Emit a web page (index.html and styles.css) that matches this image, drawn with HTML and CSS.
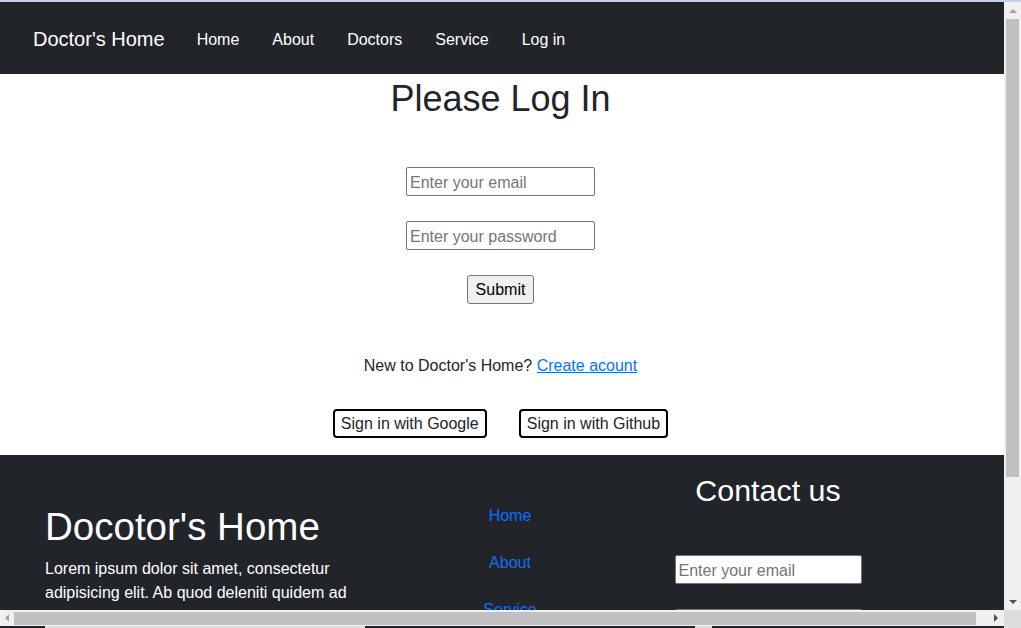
FILE: index.html
```html
<!DOCTYPE html>
<html lang="en">
<head>
<meta charset="utf-8">
<title>Doctor's Home - Log In</title>
<link rel="stylesheet" href="styles.css">
</head>
<body>
<div class="window">
  <div class="topline"></div>
  <div class="viewport">
    <nav class="navbar">
      <a class="brand" href="#">Doctor's Home</a>
      <a class="nav-link" href="#">Home</a>
      <a class="nav-link" href="#">About</a>
      <a class="nav-link" href="#">Doctors</a>
      <a class="nav-link" href="#">Service</a>
      <a class="nav-link" href="#">Log in</a>
    </nav>
    <main class="login">
      <h1 class="title">Please Log In</h1>
      <form class="login-form">
        <input class="field" type="email" placeholder="Enter your email">
        <input class="field" type="password" placeholder="Enter your password">
        <button class="submit" type="button">Submit</button>
      </form>
      <p class="signup-text">New to Doctor's Home? <a class="link" href="#">Create acount</a></p>
      <div class="social">
        <button class="social-btn" type="button">Sign in with Google</button>
        <button class="social-btn" type="button">Sign in with Github</button>
      </div>
    </main>
    <footer class="footer">
      <div class="foot-about">
        <h1 class="foot-title">Docotor's Home</h1>
        <p class="foot-text">Lorem ipsum dolor sit amet, consectetur adipisicing elit. Ab quod deleniti quidem ad voluptatibus repellendus nobis, eveniet minima quae.</p>
      </div>
      <ul class="foot-links">
        <li><a class="link-plain" href="#">Home</a></li>
        <li><a class="link-plain" href="#">About</a></li>
        <li><a class="link-plain" href="#">Service</a></li>
        <li><a class="link-plain" href="#">Doctors</a></li>
      </ul>
      <div class="foot-contact">
        <h2 class="contact-title">Contact us</h2>
        <input class="field contact-field" type="email" placeholder="Enter your email">
        <input class="field contact-field" type="text" placeholder="Your message">
      </div>
    </footer>
  </div>
  <div class="vscroll">
    <div class="arrow-box"><span class="tri tri-up"></span></div>
    <div class="vthumb"></div>
    <div class="track-fill"></div>
    <div class="arrow-box"><span class="tri tri-down"></span></div>
  </div>
  <div class="hscroll">
    <div class="harrow-box"><span class="tri tri-left"></span></div>
    <div class="hthumb"></div>
    <div class="track-fill"></div>
    <div class="harrow-box wide"><span class="tri tri-right"></span></div>
  </div>
  <div class="corner"></div>
  <div class="bottomstrip"></div>
</div>
</body>
</html>
```
FILE: styles.css
```css
* { box-sizing: border-box; }
html, body { margin: 0; height: 100%; }
body {
  font-family: "Liberation Sans", Arial, sans-serif;
  color: #212529;
  background: #fff;
  overflow: hidden;
}
.window {
  display: grid;
  grid-template-columns: 1004px 17px;
  grid-template-rows: 2px 608px 16px 2px;
  width: 1021px;
  height: 628px;
}
.topline { grid-column: 1 / 3; background: #c3d1ea; }
.viewport { overflow: hidden; background: #fff; }

/* navbar */
.navbar {
  height: 72px;
  background: #212529;
  display: flex;
  align-items: center;
  gap: 32px;
  padding: 3px 0 0 33px;
}
.brand { font-size: 20px; color: #fff; text-decoration: none; }
.nav-link { font-size: 16px; color: #fff; text-decoration: none; }
.nav-link + .nav-link { margin-left: 1px; }

/* login */
.login {
  height: 381px;
  display: flex;
  flex-direction: column;
  align-items: center;
  padding-right: 3px;
}
.title {
  font-size: 36px;
  font-weight: 500;
  line-height: 44px;
  margin: 3px 0 0;
  color: #212529;
}
.login-form {
  margin-top: 46px;
  display: flex;
  flex-direction: column;
  align-items: center;
  gap: 25px;
}
.field {
  width: 189px;
  height: 29px;
  border: 1px solid #767676;
  border-radius: 2px;
  padding: 2px 3px 0;
  font-family: inherit;
  font-size: 16px;
  color: #212529;
  background: #fff;
}
.field::placeholder { color: #757575; }
.submit {
  width: 67px;
  height: 29px;
  background: #efefef;
  border: 1px solid #767676;
  border-radius: 3px;
  font-family: inherit;
  font-size: 16px;
  color: #000;
  padding: 1px 0 0;
}
.signup-text {
  margin: 50px 0 0;
  font-size: 16px;
  line-height: 24px;
}
.link { color: #0d6efd; text-decoration: underline; }
.social {
  margin-top: 31px;
  display: flex;
  gap: 32px;
}
.social-btn {
  height: 29px;
  padding: 1px 6px 0;
  background: #fff;
  border: 2px solid #000;
  border-radius: 4px;
  font-family: inherit;
  font-size: 16px;
  color: #212529;
}

/* footer */
.footer {
  background: #212529;
  color: #fff;
  display: grid;
  grid-template-columns: 400px 220px 296px 88px;
  height: 320px;
}
.foot-about { padding: 48px 0 0 45px; }
.foot-title {
  font-size: 38.5px;
  font-weight: 500;
  line-height: 48px;
  margin: 0;
}
.foot-text {
  margin: 6px 0 0;
  width: 320px;
  font-size: 16px;
  line-height: 24px;
}
.foot-links {
  list-style: none;
  margin: 0;
  padding: 49px 0 0;
  display: flex;
  flex-direction: column;
  align-items: center;
  gap: 23px;
}
.foot-links li { line-height: 24px; font-size: 16px; }
.link-plain { color: #0d6efd; text-decoration: none; }
.foot-contact {
  padding-top: 17px;
  display: flex;
  flex-direction: column;
  align-items: center;
}
.contact-title {
  font-size: 30.4px;
  font-weight: 500;
  line-height: 36px;
  margin: 0 0 47px;
}
.contact-field { width: 187px; margin-bottom: 25px; }

/* scrollbars */
.vscroll {
  background: #f0f0f0;
  display: flex;
  flex-direction: column;
  align-items: center;
}
.arrow-box {
  height: 17px;
  width: 17px;
  display: flex;
  align-items: center;
  justify-content: center;
}
.vthumb { width: 13px; height: 458px; background: #c1c1c1; }
.track-fill { flex: 1; }
.hscroll {
  background: #f0f0f0;
  display: flex;
  align-items: center;
}
.harrow-box {
  width: 14px;
  height: 16px;
  display: flex;
  align-items: center;
  justify-content: center;
}
.harrow-box.wide { width: 17px; }
.hthumb { width: 962px; height: 13px; margin-top: 1px; background: #c1c1c1; }
.tri { width: 0; height: 0; display: block; }
.tri-up { border-left: 4px solid transparent; border-right: 4px solid transparent; border-bottom: 4px solid #a3a3a3; }
.tri-down { border-left: 4px solid transparent; border-right: 4px solid transparent; border-top: 4px solid #505050; }
.tri-left { border-top: 4px solid transparent; border-bottom: 4px solid transparent; border-right: 4px solid #a3a3a3; }
.tri-right { border-top: 4px solid transparent; border-bottom: 4px solid transparent; border-left: 4px solid #505050; }
.corner { background: #dcdcdc; }
.bottomstrip {
  grid-column: 1 / 3;
  background: linear-gradient(to right,
    #212529 0 45px, #dedede 45px 365px, #212529 365px 695px,
    #dedede 695px 712px, #212529 712px 1004px, #dedede 1004px);
}
```
